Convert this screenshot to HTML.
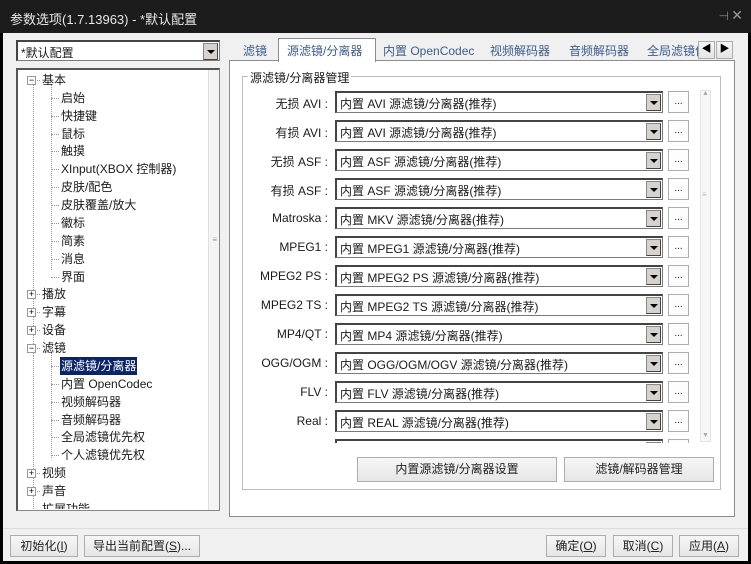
<!DOCTYPE html>
<html><head><meta charset="utf-8"><style>
*{box-sizing:border-box;margin:0;padding:0}
body{width:751px;height:564px;background:#000;font-family:"Liberation Sans","Noto Sans CJK SC",sans-serif;font-size:12px;color:#1a1a1a;position:relative;overflow:hidden}
.a{position:absolute}
#title{left:0;top:0;width:751px;height:33px;background:#1c1c1c;color:#e8e8e8;font-size:13px;padding:9px 0 0 10px}
#win{left:3px;top:33px;width:745px;height:528px;background:#f0f0f0}
.combo{background:#fff;border:1px solid #7a7a7a;border-top:2px solid #444;border-left:2px solid #444;height:22px;padding:2px 0 0 3px;white-space:nowrap;overflow:hidden}
.dd{position:absolute;right:1px;top:1px;width:15px;height:17px;background:#d6d3ce;border:1px solid #888;border-right-color:#444;border-bottom-color:#444}
.dd:after{content:"";position:absolute;left:3px;top:6px;border-left:4px solid transparent;border-right:4px solid transparent;border-top:4px solid #000}
.btn{background:linear-gradient(#f6f6f6,#e6e6e6);border:1px solid #adadad;text-align:center;color:#222}
.tr{position:absolute;height:18px;line-height:18px;white-space:nowrap}
.pm{position:absolute;width:9px;height:9px;border:1px solid #999;background:#fff;font-size:9px;line-height:7px;text-align:center;color:#000}
.lbl{position:absolute;width:90px;text-align:right;left:238px}
</style></head><body>
<div class="a" id="title">参数选项(1.7.13963) - *默认配置</div>
<div class="a" style="right:22px;top:9px;color:#888;font-size:12px">⊣</div>
<div class="a" style="right:8px;top:7px;color:#999;font-size:14px">✕</div>
<div class="a" id="win"></div>

<div class="a combo" style="left:16px;top:40px;width:204px;height:21px">*默认配置<div class="dd"></div></div>

<div class="a" style="left:16px;top:68px;width:204px;height:443px;background:#fff;border:1px solid #828790;border-top:2px solid #555;border-left:2px solid #555;overflow:hidden">
<div class="a" style="right:0;top:0;width:11px;height:441px;background:#f4f4f4;border-left:1px solid #e0e0e0"></div>
<div class="a" style="right:2px;top:165px;color:#999;font-size:8px">≡</div>
<div class="a" style="left:15px;top:14px;height:270px;border-left:1px dotted #999"></div>
<div class="a" style="left:15px;top:285px;height:160px;border-left:1px dotted #999"></div>
<div class="a" style="left:33px;top:14px;height:186px;border-left:1px dotted #999"></div>
<div class="a" style="left:33px;top:282px;height:106px;border-left:1px dotted #999"></div>
</div>
<div id="tree"></div>

<div class="a" style="left:229px;top:60px;width:506px;height:457px;border:1px solid #898c95;background:#fff"></div>
<div class="a" style="left:278px;top:38px;width:98px;height:24px;background:#fff;border:1px solid #898c95;border-bottom:none"></div>
<div class="a" style="left:243px;top:42px;color:#3c5c8c">滤镜</div>
<div class="a" style="left:287px;top:42px;color:#3c5c8c">源滤镜/分离器</div>
<div class="a" style="left:383px;top:42px;color:#3c5c8c">内置 OpenCodec</div>
<div class="a" style="left:490px;top:42px;color:#3c5c8c">视频解码器</div>
<div class="a" style="left:569px;top:42px;color:#3c5c8c">音频解码器</div>
<div class="a" style="left:647px;top:42px;color:#3c5c8c;width:52px;overflow:hidden;white-space:nowrap">全局滤镜优</div>
<div class="a btn" style="left:698px;top:41px;width:17px;height:18px;font-size:10px;line-height:16px;color:#000">◀</div>
<div class="a btn" style="left:716px;top:41px;width:17px;height:18px;font-size:10px;line-height:16px;color:#000">▶</div>

<div class="a" style="left:242px;top:76px;width:479px;height:414px;border:1px solid #bcbcbc"></div>
<div class="a" style="left:248px;top:69px;background:#fff;padding:0 2px">源滤镜/分离器管理</div>
<div id="rows"></div>
<div class="a" style="left:330px;top:443px;width:365px;height:20px;background:#fff"></div>
<div class="a" style="left:700px;top:90px;width:11px;height:352px;background:#f7f7f7;border:1px solid #e4e4e4"></div>
<div class="a" style="left:702px;top:90px;color:#aaa;font-size:7px">▲</div>
<div class="a" style="left:702px;top:432px;color:#aaa;font-size:7px">▼</div>
<div class="a" style="left:702px;top:190px;color:#bbb;font-size:8px">≡</div>

<div class="a btn" style="left:357px;top:457px;width:200px;height:25px;line-height:23px">内置源滤镜/分离器设置</div>
<div class="a btn" style="left:564px;top:457px;width:150px;height:25px;line-height:23px">滤镜/解码器管理</div>

<div class="a" style="left:3px;top:528px;width:745px;height:1px;background:#dcdcdc"></div>
<div class="a btn" style="left:10px;top:535px;width:68px;height:22px;line-height:20px">初始化(<u>I</u>)</div>
<div class="a btn" style="left:84px;top:535px;width:116px;height:22px;line-height:20px">导出当前配置(<u>S</u>)...</div>
<div class="a btn" style="left:546px;top:535px;width:60px;height:22px;line-height:20px">确定(<u>O</u>)</div>
<div class="a btn" style="left:613px;top:535px;width:60px;height:22px;line-height:20px">取消(<u>C</u>)</div>
<div class="a btn" style="left:679px;top:535px;width:60px;height:22px;line-height:20px">应用(<u>A</u>)</div>

<script>
var items=[[0,'基本','-'],[1,'启始'],[1,'快捷键'],[1,'鼠标'],[1,'触摸'],[1,'XInput(XBOX 控制器)'],[1,'皮肤/配色'],[1,'皮肤覆盖/放大'],[1,'徽标'],[1,'简素'],[1,'消息'],[1,'界面'],[0,'播放','+'],[0,'字幕','+'],[0,'设备','+'],[0,'滤镜','-'],[1,'源滤镜/分离器',0,1],[1,'内置 OpenCodec'],[1,'视频解码器'],[1,'音频解码器'],[1,'全局滤镜优先权'],[1,'个人滤镜优先权'],[0,'视频','+'],[0,'声音','+'],[0,'扩展功能','+']];
var h='';items.forEach(function(it,i){var t=71+i*17.87;var x=it[0]?61:42;
if(t>=490){h+='<div class="tr" style="left:'+x+'px;top:'+t+'px;height:9px;overflow:hidden;line-height:18px">'+it[1]+'</div>';return;}
if(it[0])h+='<div class="a" style="left:51px;top:'+(t+9)+'px;width:8px;border-top:1px dotted #999"></div>';
else{h+='<div class="a" style="left:33px;top:'+(t+9)+'px;width:7px;border-top:1px dotted #999"></div><div class="pm" style="left:27px;top:'+(t+5)+'px">'+(it[2]=='-'?'−':'+')+'</div>';}
h+='<div class="tr" style="left:'+x+'px;top:'+t+'px;'+(it[3]?'background:#0a246a;color:#fff;padding:0 1px;left:60px':'')+'">'+it[1]+'</div>';});
document.getElementById('tree').innerHTML=h;
var rows=[['无损 AVI','内置 AVI 源滤镜/分离器(推荐)'],['有损 AVI','内置 AVI 源滤镜/分离器(推荐)'],['无损 ASF','内置 ASF 源滤镜/分离器(推荐)'],['有损 ASF','内置 ASF 源滤镜/分离器(推荐)'],['Matroska','内置 MKV 源滤镜/分离器(推荐)'],['MPEG1','内置 MPEG1 源滤镜/分离器(推荐)'],['MPEG2 PS','内置 MPEG2 PS 源滤镜/分离器(推荐)'],['MPEG2 TS','内置 MPEG2 TS 源滤镜/分离器(推荐)'],['MP4/QT','内置 MP4 源滤镜/分离器(推荐)'],['OGG/OGM','内置 OGG/OGM/OGV 源滤镜/分离器(推荐)'],['FLV','内置 FLV 源滤镜/分离器(推荐)'],['Real','内置 REAL 源滤镜/分离器(推荐)'],['','']];
var r='';rows.forEach(function(it,i){var t=91+i*29;
if(it[0])r+='<div class="lbl" style="top:'+(t+4)+'px">'+it[0]+' :</div>';
r+='<div class="a combo" style="left:335px;top:'+t+'px;width:328px">'+it[1]+'<div class="dd"></div></div>';
r+='<div class="a btn" style="left:668px;top:'+t+'px;width:21px;height:22px;font-size:10px;line-height:20px;background:#fdfdfd">...</div>';});
document.getElementById('rows').innerHTML=r;
</script>
</body></html>
